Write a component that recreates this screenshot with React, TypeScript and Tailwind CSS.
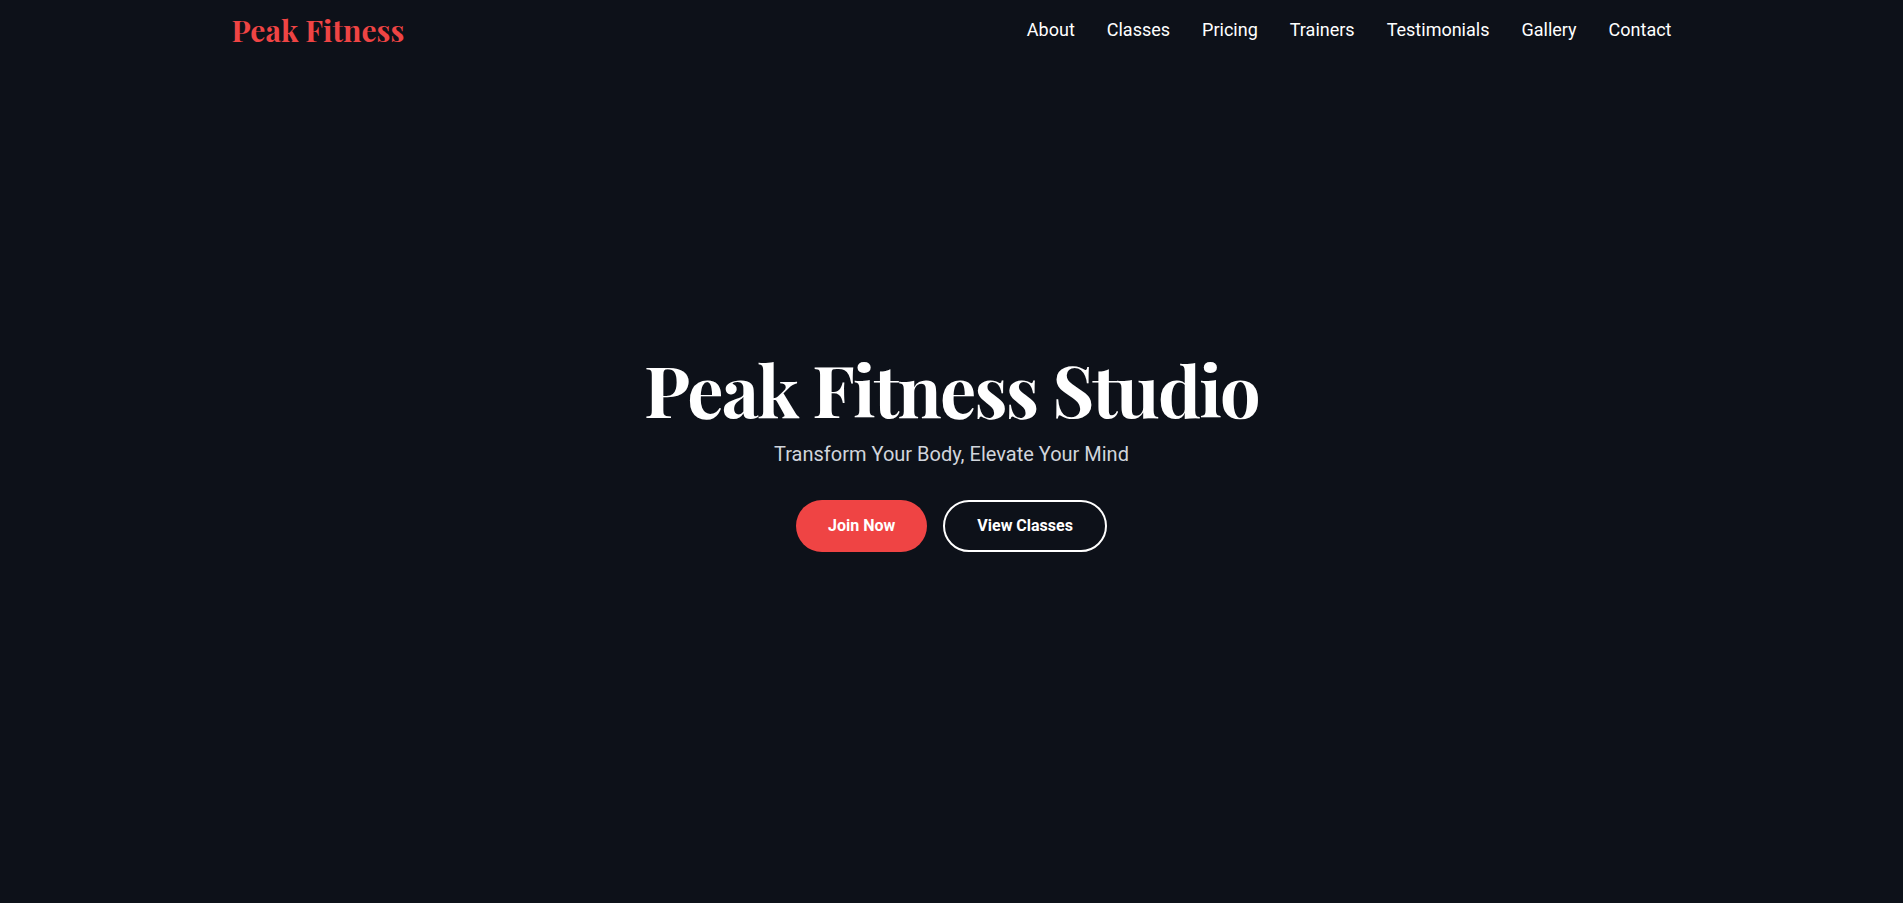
const navLinks = ['About', 'Classes', 'Pricing', 'Trainers', 'Testimonials', 'Gallery', 'Contact'];

function Header() {
  return (
    <header className="absolute top-0 inset-x-0 z-10">
      <div className="max-w-[1536px] mx-auto px-12 py-3 flex items-center justify-between">
        <a
          href="#"
          className="text-3xl font-bold text-[#ef4444] font-['Playfair_Display','Liberation_Serif',serif]"
        >
          Peak Fitness
        </a>
        <nav className="flex items-center gap-8" aria-label="Main navigation">
          {navLinks.map((link) => (
            <a
              key={link}
              href={`#${link.toLowerCase()}`}
              className="text-lg text-white hover:text-red-400 transition-colors"
            >
              {link}
            </a>
          ))}
        </nav>
      </div>
    </header>
  );
}

function Hero() {
  return (
    <section className="h-screen flex flex-col items-center justify-center text-center px-6">
      <h1 className="text-7xl font-bold tracking-tight text-white mb-4 font-['Playfair_Display','Liberation_Serif',serif]">
        Peak Fitness Studio
      </h1>
      <p className="text-xl text-gray-300 mb-8">Transform Your Body, Elevate Your Mind</p>
      <div className="flex items-center gap-4">
        <a
          href="#pricing"
          className="px-8 py-3.5 rounded-full bg-[#ef4444] text-white font-bold text-base hover:bg-red-600 transition-colors"
        >
          Join Now
        </a>
        <a
          href="#classes"
          className="px-8 py-3 rounded-full border-2 border-white text-white font-bold text-base hover:bg-white hover:text-gray-900 transition-colors"
        >
          View Classes
        </a>
      </div>
    </section>
  );
}

export default function App() {
  return (
    <div className="relative min-h-screen bg-[#0d1119] font-['Roboto','Liberation_Sans',sans-serif]">
      <Header />
      <Hero />
    </div>
  );
}
